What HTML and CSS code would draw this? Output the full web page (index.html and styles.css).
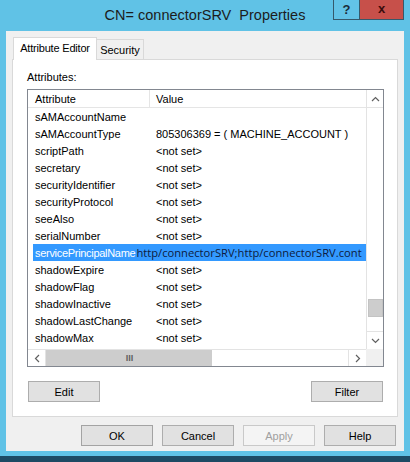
FILE: index.html
```html
<!DOCTYPE html>
<html>
<head>
<meta charset="utf-8">
<link rel="stylesheet" href="styles.css">
</head>
<body>
<div class="window">
  <div class="titlebar">
    <div></div>
    <div class="title">CN= connectorSRV&nbsp; Properties</div>
    <div class="caption-btns"><span class="cb help">?</span><span class="cb close">x</span></div>
  </div>
  <div class="client">
    <div class="tabs">
      <div class="tab active">Attribute Editor</div>
      <div class="tab">Security</div>
    </div>
    <div class="page">
      <div class="label">Attributes:</div>
      <div class="listbox">
        <div class="list">
          <div class="header"><span class="c1">Attribute</span><span class="c2">Value</span></div>
          <div class="row"><span class="c1">sAMAccountName</span><span class="c2"></span></div>
          <div class="row"><span class="c1">sAMAccountType</span><span class="c2">805306369 = ( MACHINE_ACCOUNT )</span></div>
          <div class="row"><span class="c1">scriptPath</span><span class="c2">&lt;not set&gt;</span></div>
          <div class="row"><span class="c1">secretary</span><span class="c2">&lt;not set&gt;</span></div>
          <div class="row"><span class="c1">securityIdentifier</span><span class="c2">&lt;not set&gt;</span></div>
          <div class="row"><span class="c1">securityProtocol</span><span class="c2">&lt;not set&gt;</span></div>
          <div class="row"><span class="c1">seeAlso</span><span class="c2">&lt;not set&gt;</span></div>
          <div class="row"><span class="c1">serialNumber</span><span class="c2">&lt;not set&gt;</span></div>
          <div class="row selected"><span class="sel-name">servicePrincipalName</span><span class="sel-value">http/connectorSRV;http/connectorSRV.cont</span></div>
          <div class="row"><span class="c1">shadowExpire</span><span class="c2">&lt;not set&gt;</span></div>
          <div class="row"><span class="c1">shadowFlag</span><span class="c2">&lt;not set&gt;</span></div>
          <div class="row"><span class="c1">shadowInactive</span><span class="c2">&lt;not set&gt;</span></div>
          <div class="row"><span class="c1">shadowLastChange</span><span class="c2">&lt;not set&gt;</span></div>
          <div class="row"><span class="c1">shadowMax</span><span class="c2">&lt;not set&gt;</span></div>
        </div>
        <div class="vscroll">
          <div class="sbtn"><svg width="9" height="6" viewBox="0 0 9 6"><polyline points="1,5 4.5,1.5 8,5" fill="none" stroke="#606060" stroke-width="1.2"/></svg></div>
          <div class="vtrack"><div class="vthumb"></div></div>
          <div class="sbtn down"><svg width="9" height="6" viewBox="0 0 9 6"><polyline points="1,1 4.5,4.5 8,1" fill="none" stroke="#606060" stroke-width="1.2"/></svg></div>
        </div>
        <div class="hscroll">
          <div class="sbtn"><svg width="6" height="9" viewBox="0 0 6 9"><polyline points="5,1 1.5,4.5 5,8" fill="none" stroke="#606060" stroke-width="1.2"/></svg></div>
          <div class="hthumb"><span class="grip">III</span></div>
          <div class="htrack"></div>
          <div class="sbtn right"><svg width="6" height="9" viewBox="0 0 6 9"><polyline points="1,1 4.5,4.5 1,8" fill="none" stroke="#606060" stroke-width="1.2"/></svg></div>
        </div>
        <div class="corner"></div>
      </div>
      <div class="page-btns">
        <div class="btn">Edit</div>
        <div class="btn">Filter</div>
      </div>
    </div>
    <div class="dlg-btns">
      <div class="btn default">OK</div>
      <div class="btn">Cancel</div>
      <div class="btn disabled">Apply</div>
      <div class="btn">Help</div>
    </div>
  </div>
  <div class="frame-bottom"></div>
</div>
</body>
</html>
```
FILE: styles.css
```css
html, body {
  margin: 0;
  padding: 0;
}
body {
  background: #60c2e6;
  font-family: "Liberation Sans", Arial, sans-serif;
  font-size: 11px;
  color: #000;
}
.window {
  width: 410px;
  height: 462px;
  display: flex;
  flex-direction: column;
  background: #60c2e6;
  overflow: hidden;
}
.titlebar {
  height: 31px;
  display: grid;
  grid-template-columns: 71px 1fr 71px;
  padding: 0 6px;
}
.title {
  text-align: center;
  font-size: 14.5px;
  line-height: 31px;
  color: #1c1c1c;
}
.caption-btns {
  display: flex;
  align-self: start;
  height: 20px;
}
.cb {
  box-sizing: border-box;
  height: 20px;
  display: flex;
  align-items: center;
  justify-content: center;
  font-weight: bold;
  border: 1px solid #35596b;
  border-top: none;
}
.cb.help {
  width: 26px;
  font-size: 13px;
  color: #1b2c3a;
  background: #62c3e7;
  border-right: none;
}
.cb.close {
  width: 45px;
  font-size: 13px;
  color: #3a0c0c;
  background: #c7504a;
  padding-bottom: 2px;
}
.client {
  margin: 0 6px;
  height: 420px;
  background: #f0f0f0;
  padding: 6px 6px 0 6px;
  box-sizing: border-box;
  display: flex;
  flex-direction: column;
}
.tabs {
  height: 22px;
  display: flex;
  align-items: flex-end;
  padding-left: 1px;
}
.tab {
  box-sizing: border-box;
  height: 20px;
  border: 1px solid #d9d9d9;
  border-bottom: none;
  background: #f0f0f0;
  display: flex;
  align-items: center;
  justify-content: center;
  font-size: 11px;
}
.tab.active {
  width: 84px;
  height: 23px;
  margin-bottom: -1px;
  background: #fff;
  position: relative;
  z-index: 1;
  padding-bottom: 2px;
  letter-spacing: -0.2px;
}
.tab:not(.active) {
  width: 47px;
  border-left: none;
  padding-top: 1px;
}
.page {
  box-sizing: border-box;
  height: 358px;
  border: 1px solid #d9d9d9;
  background: #fff;
  padding: 0 13px 0 14px;
  display: flex;
  flex-direction: column;
}
.label {
  margin-top: 10px;
  line-height: 14px;
  height: 14px;
}
.listbox {
  margin-top: 5px;
  box-sizing: border-box;
  width: 357px;
  height: 278px;
  border: 1px solid #828790;
  display: grid;
  grid-template-columns: 338px 17px;
  grid-template-rows: 259px 17px;
}
.list {
  overflow: hidden;
  background: #fff;
}
.header {
  height: 18px;
  box-sizing: border-box;
  border-bottom: 1px solid #e5e5e5;
  display: flex;
  align-items: center;
}
.header .c1 {
  border-right: 1px solid #e5e5e5;
  height: 18px;
  line-height: 18px;
  box-sizing: border-box;
}
.c1 {
  width: 122px;
  padding-left: 7px;
  box-sizing: border-box;
  white-space: nowrap;
}
.c2 {
  padding-left: 6px;
  white-space: nowrap;
}
.row {
  height: 17px;
  display: flex;
  align-items: center;
  white-space: nowrap;
}
.row.selected {
  margin-left: 5px;
  background: #3399ff;
  overflow: hidden;
}
.sel-name {
  color: #fff;
  padding-left: 2px;
  letter-spacing: -0.3px;
}
.sel-value {
  font-family: "Open Sans", sans-serif;
  font-size: 11.2px;
  color: #0d1b40;
  padding-left: 1px;
}
.vscroll {
  display: flex;
  flex-direction: column;
  background: #fff;
  border-left: 1px solid #e3e3e3;
  box-sizing: border-box;
}
.sbtn {
  height: 18px;
  box-sizing: border-box;
  display: flex;
  align-items: center;
  justify-content: center;
  background: #fff;
  flex-shrink: 0;
}
.vscroll .sbtn {
  border-bottom: 1px solid #e3e3e3;
}
.vscroll .sbtn.down {
  border-bottom: none;
  border-top: 1px solid #e3e3e3;
}
.vtrack {
  flex: 1;
  padding-top: 191px;
}
.vthumb {
  height: 16px;
  background: #cdcdcd;
  border: 1px solid #c3c3c3;
  margin: 0 0 0 1px;
}
.hscroll {
  display: flex;
  background: #fff;
  border-top: 1px solid #e3e3e3;
  box-sizing: border-box;
}
.hscroll .sbtn {
  width: 18px;
  height: 16px;
  border-right: 1px solid #e3e3e3;
}
.hscroll .sbtn.right {
  border-right: none;
  border-left: 1px solid #e3e3e3;
}
.hthumb {
  width: 165px;
  background: #cdcdcd;
  display: flex;
  align-items: center;
  justify-content: center;
  height: 16px;
  padding-left: 1px;
}
.grip {
  font-size: 9px;
  line-height: 10px;
  color: #606060;
  font-weight: bold;
}
.htrack {
  flex: 1;
}
.corner {
  background: #f0f0f0;
}
.page-btns {
  margin-top: 14px;
  display: flex;
  justify-content: space-between;
  padding-left: 1px;
  width: 355px;
}
.btn {
  box-sizing: border-box;
  width: 72px;
  height: 21px;
  background: #e1e1e1;
  border: 1px solid #adadad;
  display: flex;
  align-items: center;
  justify-content: center;
  font-size: 11px;
  color: #000;
}
.dlg-btns {
  margin-top: 8px;
  display: flex;
  justify-content: flex-end;
  gap: 9px;
  padding-right: 2px;
}
.btn.default {
  border-color: #a3a3a3;
  background: #e1e1e1;
}
.btn.disabled {
  background: #f4f4f4;
  border-color: #c9c9c9;
  color: #a0a0a0;
}
.frame-bottom {
  margin-top: 5px;
  flex: 1;
  background: #1d4a64;
}
```
